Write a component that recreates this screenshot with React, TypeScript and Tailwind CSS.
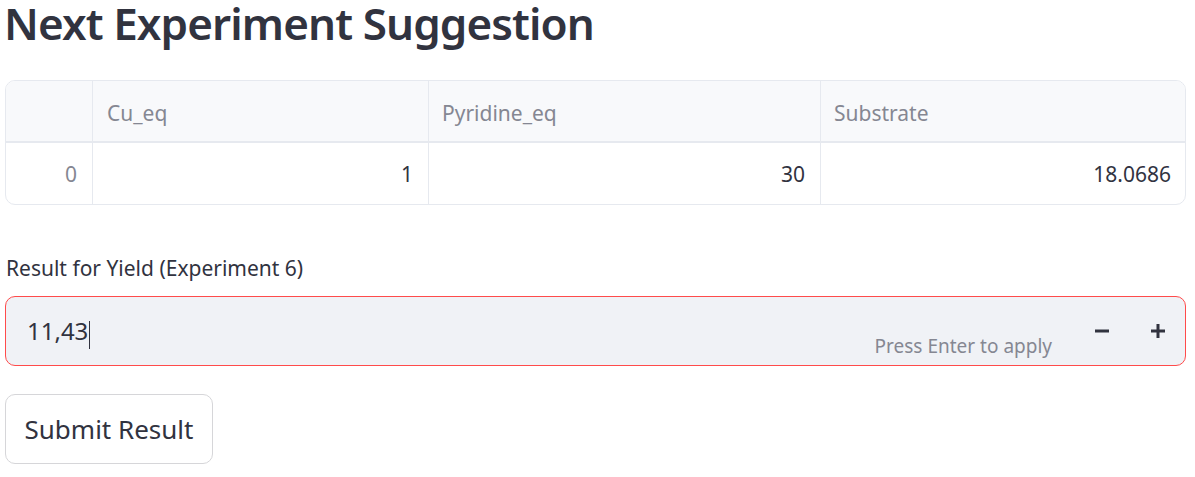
import React from "react";

export default function App() {
  const font = { fontFamily: '"Noto Sans", "Open Sans", sans-serif' };
  return (
    <div className="w-[1195px] h-[477px] bg-white text-[#31333f] pl-[5px] pr-[9px]" style={font}>
      <div className="h-[80px] flex flex-col">
        <h1 className="text-[44px] font-semibold leading-[46px] tracking-[-0.9px] ml-[-1px]">
          Next Experiment Suggestion
        </h1>
      </div>
      <div className="border border-[#e6e9ef] rounded-[10px] overflow-hidden">
        <div className="grid grid-cols-[87px_336px_392px_1fr] bg-[#f8f9fb] h-[62px] border-b-2 border-[#e6e9ef] text-[21px] text-[#858792]">
          <div className="border-r border-[#e6e9ef]"></div>
          <div className="border-r border-[#e6e9ef] flex items-center pl-[14px] pt-[6px]">Cu_eq</div>
          <div className="border-r border-[#e6e9ef] flex items-center pl-[13px] pt-[6px]">Pyridine_eq</div>
          <div className="flex items-center pl-[13px] pt-[6px]">Substrate</div>
        </div>
        <div className="grid grid-cols-[87px_336px_392px_1fr] h-[61px] text-[21px]">
          <div className="border-r border-[#e6e9ef] flex items-center justify-end pr-[15px] pt-[3px] text-[#858792]">0</div>
          <div className="border-r border-[#e6e9ef] flex items-center justify-end pr-[15px] pt-[3px]">1</div>
          <div className="border-r border-[#e6e9ef] flex items-center justify-end pr-[15px] pt-[3px]">30</div>
          <div className="flex items-center justify-end pr-[14px] pt-[3px]">18.0686</div>
        </div>
      </div>
      <div className="mt-[51px] text-[21px] leading-[24px] pl-[1px]">Result for Yield (Experiment 6)</div>
      <div className="mt-[16px] h-[70px] bg-[#f0f2f6] border border-[#ff4b4b] rounded-[10px] flex items-center">
        <div className="flex-1 pl-[21px] flex items-center text-[24px]">
          <span>11,43</span>
          <span className="w-[1px] h-[28px] bg-[#31333f] ml-[1px] translate-y-[4px]"></span>
        </div>
        <div className="self-end mb-[5px] text-[19px] text-[#858792] mr-[23px]">Press Enter to apply</div>
        <div className="flex items-center h-full gap-[2px]">
          <div className="w-[54px] h-full flex items-center justify-center">
            <svg width="14" height="14" viewBox="0 0 14 14"><rect x="0" y="5.5" width="14" height="3" fill="#31333f" /></svg>
          </div>
          <div className="w-[54px] h-full flex items-center justify-center">
            <svg width="14" height="14" viewBox="0 0 14 14"><rect x="0" y="5.5" width="14" height="3" fill="#31333f" /><rect x="5.5" y="0" width="3" height="14" fill="#31333f" /></svg>
          </div>
        </div>
      </div>
      <button className="mt-[28px] h-[70px] w-[208px] border border-[#d6d6d9] rounded-[10px] bg-white text-[26px] text-[#31333f] flex items-center justify-center">
        Submit Result
      </button>
    </div>
  );
}
